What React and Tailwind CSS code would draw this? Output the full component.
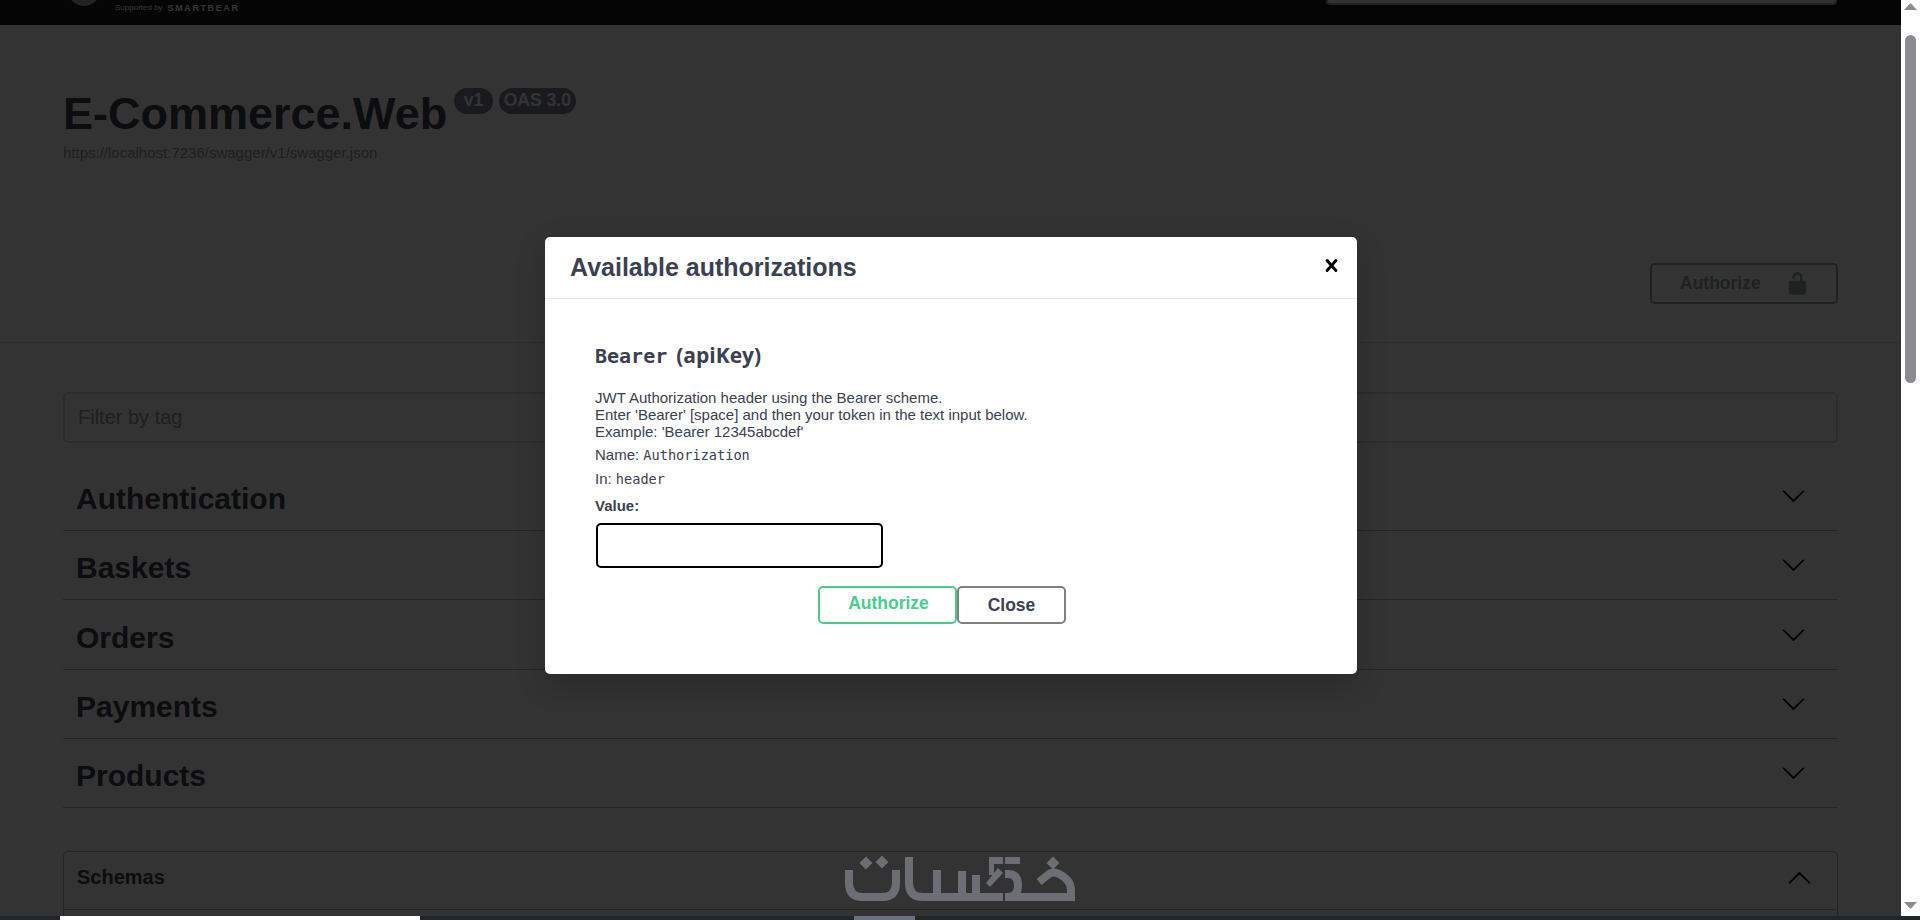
import React from 'react';

const tags = ['Authentication', 'Baskets', 'Orders', 'Payments', 'Products'];

const chevron = "M17.418 6.109c.272-.268.709-.268.979 0s.271.701 0 .969l-7.908 7.83c-.27.268-.707.268-.979 0l-7.908-7.83c-.27-.268-.27-.701 0-.969.271-.268.709-.268.979 0L10 13.25l7.418-7.141z";

function Chevron({ className }) {
    return (
        <svg viewBox="0 0 20 20" className={className} fill="currentColor">
            <path d={chevron} />
        </svg>
    );
}

function Watermark() {
    return (
        <svg viewBox="0 0 240 60" className="absolute left-[840px] top-[850px] w-[240px] h-[60px]">
            <g fill="#6b6e75">
                <path d="M26 6.5 32.5 13 26 19.5 19.5 13z" />
                <path d="M42 5.5 48.5 12 42 18.5 35.5 12z" />
                <path d="M213 6.5 219.5 13 213 19.5 206.5 13z" />
                <path d="M149 7h14v7h-9v11h-5z" />
                <path d="M165 7h15v7h-15z" />
                <path d="M158 18 163 23 150 37 146 33z" />
            </g>
            <g fill="none" stroke="#6b6e75" strokeWidth="8">
                <path d="M5 24H9V33Q9 47 23 47H42Q56 47 56 33V20" />
                <path d="M69 7V33Q69 47 83 47H163" />
                <path d="M97 20V47M122 21V47M136 25V47" />
                <path d="M165 24H168Q178 24 178 35.5Q178 47 168 47" />
                <path d="M199 32 209 24Q214 21 219 24Q231 30 231 40V51" />
                <path d="M165 47H231" />
            </g>
        </svg>
    );
}

function ActionButton({ children, className }) {
    return (
        <button className={`h-[37.5px] rounded-[5px] border-[2.5px] bg-white text-[17.5px] font-bold ${className}`}>
            {children}
        </button>
    );
}

export default function App() {
    return (
        <div className="w-[1920px] h-[920px] overflow-hidden flex flex-col bg-white font-['Liberation_Sans',Arial,sans-serif] text-[#3b4151]">
            <div className="flex h-[916px]">
                <main className="relative flex-1 overflow-hidden">
                    {/* top bar, scrolled nearly out of view */}
                    <div className="flex items-end h-[25px] bg-[#1b1b1b] overflow-hidden pl-[68px]">
                        <div className="w-8 h-8 shrink-0 rounded-full bg-[#aaa] mb-[19px]"></div>
                        <div className="flex items-center ml-[15px] mb-[11px] text-white">
                            <span className="text-[8px] leading-[12px]">Supported by</span>
                            <span className="ml-[5px] text-[9px] leading-[12px] font-bold tracking-[1.6px]">SMARTBEAR</span>
                        </div>
                        <div className="self-start ml-auto mr-[64px] w-[511px] h-[5px] bg-white border-x-2 border-b-2 border-[#aaa] rounded-b-[4px]"></div>
                    </div>

                    <div className="px-[63px] pt-[62px]">
                        <div className="flex items-start">
                            <h1 className="text-[45px] leading-[54px] font-bold">E-Commerce.Web</h1>
                            <span className="mt-[1px] ml-[7px] h-[26px] leading-[25px] px-[9.5px] rounded-full bg-[#7d8492] text-white text-[17.5px] font-bold">v1</span>
                            <span className="mt-[1px] ml-[6px] h-[26px] leading-[25px] px-[5px] rounded-full bg-[#7d8492] text-white text-[17.5px] font-bold">OAS 3.0</span>
                        </div>
                        <div className="mt-[3px] text-[15px] leading-[18px] text-[#999]">https://localhost:7236/swagger/v1/swagger.json</div>
                    </div>

                    <div className="flex justify-end px-[63px] pt-[101px] pb-[38px] border-b border-[#ddd]">
                        <button className="flex items-center w-[188px] h-[41px] pl-[28px] rounded-[5px] border-[2.5px] border-[#8fa89c] text-[#8fa89c] text-[17.5px] font-bold">
                            Authorize
                            <svg viewBox="0 0 20 20" className="ml-[24px] w-[25px] h-[25px]" fill="currentColor">
                                <path d="M15.8 8H14V5.6C14 2.703 12.665 1 10 1 7.334 1 6 2.703 6 5.6V6h2v-.801C8 3.754 8.797 3 10 3c1.203 0 2 .754 2 2.199V8H4c-.553 0-1 .646-1 1.199V17c0 .549.428 1.139.951 1.307l1.197.387C5.672 18.861 6.55 19 7.1 19h5.8c.549 0 1.428-.139 1.951-.307l1.196-.387c.524-.167.953-.757.953-1.306V9.199C17 8.646 16.352 8 15.8 8z" />
                            </svg>
                        </button>
                    </div>

                    <div className="px-[63px] pt-[49px]">
                        <input
                            readOnly
                            placeholder="Filter by tag"
                            className="block w-full h-[51px] px-[13px] rounded-[5px] border-2 border-[#d8dde7] text-[20px] placeholder:text-[#999] outline-none"
                        />

                        <div className="mt-[24px]">
                            {tags.map((tag) => (
                                <div key={tag} className="flex items-center justify-between h-[64px] mb-[5.25px] pl-[13px] pr-[32px] border-b border-[#b5b8be]">
                                    <h3 className="text-[30px] font-bold">{tag}</h3>
                                    <Chevron className="w-[25px] h-[25px] mb-[6px] text-[#111]" />
                                </div>
                            ))}
                        </div>

                        <div className="mt-[43px] h-[120px] rounded-[5px] border border-[#b5b8be]">
                            <div className="flex items-center justify-between h-[58px] pl-[13px] pr-[25px] border-b border-[#b5b8be]">
                                <h4 className="text-[20px] font-bold mb-[7px]">Schemas</h4>
                                <Chevron className="w-[25px] h-[25px] mb-[4px] rotate-180 text-black" />
                            </div>
                        </div>
                    </div>

                    {/* dialog backdrop */}
                    <div className="absolute inset-0 bg-black/80">
                        <div className="ml-[545px] mt-[237px] w-[812px] h-[437px] rounded-[5px] bg-white shadow-[0_10px_30px_rgba(0,0,0,0.2)]">
                            <div className="flex items-center justify-between h-[62px] pl-[25px] pr-[13px] border-b border-[#ebebeb]">
                                <h3 className="text-[25px] font-bold">Available authorizations</h3>
                                <svg viewBox="0 0 20 20" className="w-[25px] h-[25px] text-black mb-[4px]" fill="currentColor">
                                    <path d="M14.348 14.849a1.2 1.2 0 0 1-1.697 0L10 11.819l-2.651 3.029a1.2 1.2 0 1 1-1.697-1.697l2.758-3.15-2.759-3.152a1.2 1.2 0 1 1 1.697-1.697L10 8.183l2.651-3.031a1.2 1.2 0 1 1 1.697 1.697l-2.758 3.152 2.758 3.15a1.2 1.2 0 0 1 0 1.698z" />
                                </svg>
                            </div>
                            <div className="px-[50px] pt-[42px]">
                                <h4 className="text-[21px] leading-[28px] font-bold font-['Open_Sans',sans-serif]">
                                    <code className="font-['DejaVu_Sans_Mono',monospace] text-[20px] font-bold">Bearer</code>
                                    <span className="ml-[9px]">(apiKey)</span>
                                </h4>
                                <div className="mt-[19px] text-[15px] leading-[17px]">
                                    <p>JWT Authorization header using the Bearer scheme.</p>
                                    <p>Enter 'Bearer' [space] and then your token in the text input below.</p>
                                    <p>Example: 'Bearer 12345abcdef'</p>
                                </div>
                                <p className="mt-[5px] text-[15px] leading-[20px]">
                                    Name: <code className="font-['DejaVu_Sans_Mono',monospace] text-[13.6px]">Authorization</code>
                                </p>
                                <p className="mt-[4px] text-[15px] leading-[20px]">
                                    In: <code className="font-['DejaVu_Sans_Mono',monospace] text-[13.6px]">header</code>
                                </p>
                                <label className="block mt-[8px] text-[15px] leading-[18px] font-bold">Value:</label>
                                <input readOnly className="block mt-[8px] ml-[1px] w-[287px] h-[45px] rounded-[5px] border-2 border-black bg-white outline-none" />
                                <div className="flex mt-[18px] ml-[223px]">
                                    <ActionButton className="w-[139px] border-[#49cc90] text-[#49cc90] pb-[4px] pl-[2px]">Authorize</ActionButton>
                                    <ActionButton className="w-[109px] border-[#808080] text-[#3b4151]">Close</ActionButton>
                                </div>
                            </div>
                        </div>
                    </div>

                    <Watermark />
                </main>

                {/* browser scrollbar */}
                <div className="w-[19px] shrink-0 flex flex-col items-center bg-white">
                    <svg viewBox="0 0 13 7" className="mt-[3px] w-[13px] h-[7px] shrink-0" fill="#8b8b90">
                        <path d="M6.5 0 13 7H0z" />
                    </svg>
                    <div className="mt-[25px] w-[11px] h-[348px] rounded-full bg-[#8b8b90]"></div>
                    <svg viewBox="0 0 13 7" className="mt-auto mb-[7px] w-[13px] h-[7px] shrink-0" fill="#8b8b90">
                        <path d="M0 0H13L6.5 7z" />
                    </svg>
                </div>
            </div>

            {/* strip of the window underneath */}
            <div className="flex h-[4px] bg-[#20262a]">
                <div className="ml-[60px] w-[360px] bg-white"></div>
                <div className="ml-[434px] w-[61px] bg-[#687086]"></div>
            </div>
        </div>
    );
}
